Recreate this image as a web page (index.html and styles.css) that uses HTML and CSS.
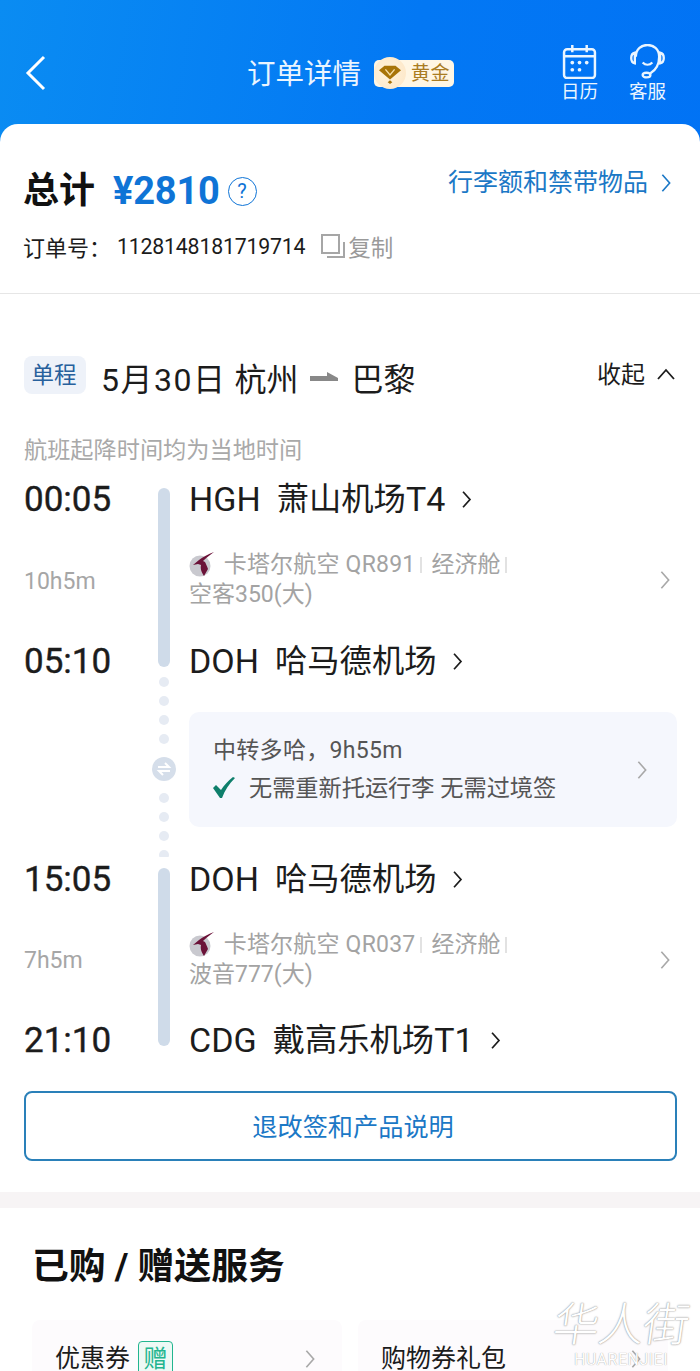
FILE: index.html
```html
<!DOCTYPE html>
<html lang="zh-CN">

<head>
    <meta charset="UTF-8">
    <meta name="viewport" content="width=device-width, initial-scale=1.0">
    <title>订单详情</title>
    <link rel="stylesheet" href="styles.css">
</head>

<body>
    <div class="page">
        <div class="header">
            <svg class="back-icon" viewBox="0 0 24 36"><path d="M20 2 L4 18 L20 34"/></svg>
            <div class="header-title">
                <span>订单详情</span>
                <div class="level-badge">
                    <span class="level-gem">
                        <svg viewBox="0 0 24 24">
                            <path class="gem-fill" d="M6 4 H18 L24 9 L12 19 L0 9 Z"/>
                            <path class="gem-cut" d="M7 8 L12 14 L17 8"/>
                            <path class="gem-fill" d="M12 20 L14.5 22 L12 24 L9.5 22 Z"/>
                        </svg>
                    </span>
                    <span class="level-name">黄金</span>
                </div>
            </div>
            <div class="header-actions">
                <div class="action">
                    <svg class="action-icon" viewBox="0 0 34 34">
                        <rect class="line" x="2" y="5" width="30" height="28" rx="3"/>
                        <path class="line" d="M2 12 H32 M10 1 V8 M24 1 V8"/>
                        <circle class="dot" cx="10" cy="18" r="1.8"/>
                        <circle class="dot" cx="17" cy="18" r="1.8"/>
                        <circle class="dot" cx="24" cy="18" r="1.8"/>
                        <circle class="dot" cx="10" cy="25" r="1.8"/>
                        <circle class="dot" cx="17" cy="25" r="1.8"/>
                    </svg>
                    <span>日历</span>
                </div>
                <div class="action">
                    <svg class="action-icon" viewBox="0 0 36 36">
                        <path class="line" d="M6 13 C6 -3 30 -3 30 13 C30 22 26 27 21 30"/>
                        <path class="line" d="M5 9 C0 10 0 19 5 20 Z M31 9 C36 10 36 19 31 20 Z"/>
                        <path class="line" d="M13 19 C16 22 20 22 23 19"/>
                        <ellipse class="line" cx="17" cy="32" rx="4" ry="2.4"/>
                    </svg>
                    <span>客服</span>
                </div>
            </div>
        </div>

        <div class="sheet">
            <div class="summary">
                <div class="total-row">
                    <span class="total-label">总计</span>
                    <span class="total-price">¥2810</span>
                    <span class="help-icon">?</span>
                    <span class="baggage-link">行李额和禁带物品</span>
                    <svg class="chev chev-blue" viewBox="0 0 12 22"><path d="M2 2 L10 11 L2 20"/></svg>
                </div>
                <div class="order-row">
                    <span class="order-label">订单号：</span>
                    <span class="order-no">1128148181719714</span>
                    <svg class="copy-icon" viewBox="0 0 24 24">
                        <path d="M1 1 H18 V19 H1 Z M6 23 H23 V8"/>
                    </svg>
                    <span class="copy-text">复制</span>
                </div>
            </div>

            <div class="trip">
                <div class="route-row">
                    <span class="route-tag">单程</span>
                    <span class="route-title"><span class="route-date">5月30日</span> 杭州</span>
                    <svg class="route-arrow" viewBox="0 0 28 12"><path d="M0 5 H17 V1 L28 7 V10 H0 Z"/></svg>
                    <span class="route-title">巴黎</span>
                    <span class="collapse">收起</span>
                    <svg class="chev-up" viewBox="0 0 20 12"><path d="M2 11 L10 2 L18 11"/></svg>
                </div>
                <p class="local-note">航班起降时间均为当地时间</p>

                <div class="segment">
                    <div class="rail-bar"></div>
                    <div class="seg-time">00:05</div>
                    <div class="seg-station"><span class="seg-code">HGH</span>&nbsp;&nbsp;萧山机场<span class="seg-code">T4</span><svg class="chev chev-dark" viewBox="0 0 12 22"><path d="M2 2 L10 11 L2 20"/></svg></div>
                    <div class="seg-duration">10h5m</div>
                    <div class="seg-flight">
                        <div class="flight-text">
                            <svg class="airline-logo" viewBox="0 0 26 26">
                                <circle class="logo-disc" cx="11" cy="15" r="10.5"/>
                                <path class="logo-mark" d="M25 1 C19 3 14 6 10 9 L4 14 L9 13 L12 14 C11 18 13 22 15 25 L19 18 C18 15 17 13 16 11 L14 10 C17 7 21 4 25 1 Z"/>
                            </svg>
                            <span class="flight-name">卡塔尔航空 QR891</span><i class="sep"></i><span>经济舱</span><i class="sep"></i><br>空客350(大)
                        </div>
                        <svg class="chev chev-grey" viewBox="0 0 12 22"><path d="M2 2 L10 11 L2 20"/></svg>
                    </div>
                    <div class="seg-time">05:10</div>
                    <div class="seg-station"><span class="seg-code">DOH</span>&nbsp;&nbsp;哈马德机场<svg class="chev chev-dark" viewBox="0 0 12 22"><path d="M2 2 L10 11 L2 20"/></svg></div>
                </div>

                <div class="layover">
                    <div class="dots">
                        <i></i><i></i><i></i><i></i>
                        <span class="swap-icon">
                            <svg viewBox="0 0 24 24">
                                <path d="M6 10 H17 L13 6 M18 14 H7 L11 18"/>
                            </svg>
                        </span>
                        <i></i><i></i><i></i><i></i>
                    </div>
                    <div class="layover-card">
                        <div class="layover-text">
                            <div class="layover-title">中转多哈，9h55m</div>
                            <div class="layover-check">
                                <svg class="check-icon" viewBox="0 0 22 22"><path d="M0 11 L3 8 L8 13 C11 8 15 4 20 0 L22 1 C16 7 12 13 9 21 L7 21 Z"/></svg>
                                <span>无需重新托运行李 无需过境签</span>
                            </div>
                        </div>
                        <svg class="chev chev-grey" viewBox="0 0 12 22"><path d="M2 2 L10 11 L2 20"/></svg>
                    </div>
                </div>

                <div class="segment">
                    <div class="rail-bar"></div>
                    <div class="seg-time">15:05</div>
                    <div class="seg-station"><span class="seg-code">DOH</span>&nbsp;&nbsp;哈马德机场<svg class="chev chev-dark" viewBox="0 0 12 22"><path d="M2 2 L10 11 L2 20"/></svg></div>
                    <div class="seg-duration">7h5m</div>
                    <div class="seg-flight">
                        <div class="flight-text">
                            <svg class="airline-logo" viewBox="0 0 26 26">
                                <circle class="logo-disc" cx="11" cy="15" r="10.5"/>
                                <path class="logo-mark" d="M25 1 C19 3 14 6 10 9 L4 14 L9 13 L12 14 C11 18 13 22 15 25 L19 18 C18 15 17 13 16 11 L14 10 C17 7 21 4 25 1 Z"/>
                            </svg>
                            <span class="flight-name">卡塔尔航空 QR037</span><i class="sep"></i><span>经济舱</span><i class="sep"></i><br>波音777(大)
                        </div>
                        <svg class="chev chev-grey" viewBox="0 0 12 22"><path d="M2 2 L10 11 L2 20"/></svg>
                    </div>
                    <div class="seg-time">21:10</div>
                    <div class="seg-station"><span class="seg-code">CDG</span>&nbsp;&nbsp;戴高乐机场<span class="seg-code">T1</span><svg class="chev chev-dark" viewBox="0 0 12 22"><path d="M2 2 L10 11 L2 20"/></svg></div>
                </div>

                <div class="policy-btn">退改签和产品说明</div>
            </div>

            <div class="band"></div>

            <div class="services">
                <h2>已购 / 赠送服务</h2>
                <div class="service-grid">
                    <div class="service-card">
                        <span>优惠券</span>
                        <span class="gift-tag">赠</span>
                        <svg class="chev chev-grey" viewBox="0 0 12 22"><path d="M2 2 L10 11 L2 20"/></svg>
                    </div>
                    <div class="service-card">
                        <span>购物券礼包</span>
                        <svg class="chev chev-grey" viewBox="0 0 12 22"><path d="M2 2 L10 11 L2 20"/></svg>
                    </div>
                </div>
            </div>
        </div>

        <div class="watermark">
            <div class="wm-cn">华人街</div>
            <div class="wm-en">HUARENJIEI</div>
        </div>
    </div>
</body>
</html>
```

FILE: styles.css
```css
body, html {
    margin: 0;
    padding: 0;
    width: 100%;
    height: 100%;
    overflow: hidden;
    background: #fff;
    font-family: Roboto, "Noto Sans CJK SC", sans-serif;
    color: #1c1c1c;
}

.page {
    position: relative;
    height: 1371px;
    overflow: hidden;
    background: linear-gradient(100deg, #0a8cf2 0%, #0378f4 45%, #006ff5 100%);
}

/* 顶部 */
.header {
    height: 124px;
    display: flex;
    align-items: flex-start;
    position: relative;
    color: #eaf5ff;
}

.back-icon {
    width: 24px;
    height: 36px;
    margin: 55px 0 0 24px;
    fill: none;
    stroke: #fff;
    stroke-width: 3;
}

.header-title {
    display: flex;
    align-items: center;
    margin: 53px 0 0 199px;
    font-size: 28.5px;
    line-height: 40px;
}

.header-title > span {
    position: relative;
    top: 2px;
}

.level-badge {
    display: flex;
    align-items: center;
    margin-left: 13px;
    height: 27px;
    width: 80px;
    background: #fff6e4;
    border-radius: 5px;
}

.level-gem {
    width: 32px;
    height: 32px;
    border-radius: 50%;
    background: radial-gradient(circle at 40% 50%, #fff3dc 0%, #fde6c6 100%);
    display: flex;
    align-items: center;
    justify-content: center;
    flex: none;
}

.level-gem svg {
    width: 22px;
    height: 22px;
}

.gem-fill {
    fill: #a87408;
}

.gem-cut {
    fill: none;
    stroke: #f6dfa8;
    stroke-width: 1.5;
}

.level-name {
    margin-left: 5px;
    font-size: 19px;
    line-height: 27px;
    letter-spacing: 0.5px;
    color: #a97c22;
}

.header-actions {
    display: flex;
    gap: 31px;
    margin: 44px 0 0 107px;
}

.action {
    display: flex;
    flex-direction: column;
    align-items: center;
    width: 37px;
    font-size: 18.5px;
    line-height: 24px;
    white-space: nowrap;
}

.action-icon {
    width: 35px;
    height: 35px;
    margin-bottom: 1px;
}

.line {
    fill: none;
    stroke: #eaf5ff;
    stroke-width: 2.4;
}

.dot {
    fill: #eaf5ff;
}

/* 白色主体 */
.sheet {
    background: #fff;
    border-radius: 18px 18px 0 0;
    height: 1247px;
    overflow: hidden;
}

.summary {
    height: 170px;
    box-sizing: border-box;
    padding: 43px 24px 0;
    border-bottom: 1px solid #e6e6e6;
}

.total-row {
    display: flex;
    align-items: center;
    height: 48px;
}

.total-label {
    font-size: 36px;
    font-weight: 700;
    color: #111;
    line-height: 48px;
    width: 90px;
    margin-left: -1px;
}

.total-price {
    font-size: 38px;
    font-weight: 700;
    color: #0f74d6;
    line-height: 48px;
    letter-spacing: -0.2px;
}

.help-icon {
    width: 27px;
    height: 27px;
    margin-left: 8px;
    border: 1px solid #0f74d6;
    border-radius: 50%;
    font-size: 20px;
    line-height: 27px;
    text-align: center;
    color: #0f74d6;
}

.baggage-link {
    margin-left: auto;
    font-size: 25px;
    line-height: 34px;
    color: #1b78c6;
    position: relative;
    top: -8px;
}

.chev {
    fill: none;
    stroke-width: 1.8;
    flex: none;
}

.chev-blue {
    width: 12px;
    height: 20px;
    margin: 0 4px 16px 12px;
    stroke: #1b78c6;
}

.chev-dark {
    width: 13px;
    height: 19px;
    margin-left: 15px;
    stroke: #1c1c1c;
    stroke-width: 2;
}

.chev-grey {
    width: 12px;
    height: 20px;
    stroke: #a8a8a8;
}

.order-row {
    display: flex;
    align-items: center;
    margin-top: 14px;
    height: 34px;
    font-size: 22px;
}

.order-label {
    width: 93px;
    margin-left: -1px;
    margin-right: 1px;
}

.order-no {
    font-size: 21.3px;
    letter-spacing: -0.2px;
}

.copy-icon {
    width: 24px;
    height: 24px;
    margin-left: 16px;
    fill: none;
    stroke: #a6a6a6;
    stroke-width: 2;
}

.copy-text {
    margin-left: 3px;
    color: #9a9a9a;
    font-size: 22.5px;
}

.trip {
    padding: 62px 23px 0 24px;
}

.route-row {
    display: flex;
    align-items: flex-start;
    height: 40px;
}

.route-tag {
    width: 62px;
    height: 38px;
    padding-right: 2px;
    box-sizing: border-box;
    background: #eef2f9;
    border-radius: 8px;
    font-size: 22.5px;
    line-height: 38px;
    text-align: center;
    color: #27609c;
    margin-right: 15px;
}

.route-title {
    font-size: 32px;
    line-height: 48px;
}

.route-date {
    letter-spacing: 1.5px;
}

.route-arrow {
    width: 28px;
    height: 12px;
    margin: 15px 13px 0 12px;
    fill: #888;
}

.collapse {
    margin-left: auto;
    margin-right: 1px;
    font-size: 24px;
    line-height: 38px;
}

.chev-up {
    width: 20px;
    height: 12px;
    margin: 12px 1px 0 10px;
    fill: none;
    stroke: #1c1c1c;
    stroke-width: 1.8;
}

.local-note {
    margin: 37px 0 0;
    font-size: 23.2px;
    line-height: 34px;
    color: #a9a9a9;
}

/* 航段 */
.segment {
    display: grid;
    grid-template-columns: 134px 12px 1fr;
    grid-template-rows: 44px 118px 44px;
    margin-top: 10px;
}

.layover + .segment {
    margin-top: 0;
    grid-template-rows: 44px 117px 44px;
}

.rail-bar {
    grid-column: 2;
    grid-row: 1 / 4;
    margin: 11px 0 16px;
    background: #cfdbe9;
    border-radius: 6px;
}

.seg-time {
    grid-column: 1;
    font-size: 35px;
    line-height: 46px;
    height: 44px;
    -webkit-text-stroke: 0.4px #1c1c1c;
}

.seg-station {
    grid-column: 3;
    padding-left: 19px;
    display: flex;
    align-items: center;
    font-size: 32.3px;
    line-height: 44px;
    white-space: nowrap;
}

.seg-code {
    font-size: 34px;
}

.seg-duration {
    grid-column: 1;
    font-size: 23px;
    color: #a6a6a6;
    align-self: center;
    margin-top: 2px;
}

.seg-flight {
    grid-column: 3;
    padding-left: 19px;
    display: flex;
    align-items: center;
    justify-content: space-between;
    padding-right: 6px;
    color: #a3a3a3;
    font-size: 23px;
    line-height: 30px;
}

.flight-text {
    white-space: nowrap;
}

.flight-name {
    letter-spacing: 0.2px;
}

.airline-logo {
    width: 26px;
    height: 26px;
    vertical-align: -5px;
    margin-right: 3px;
}

.logo-disc {
    fill: #c9c9cf;
}

.logo-mark {
    fill: #6b1238;
}

.sep {
    display: inline-block;
    width: 2px;
    height: 16px;
    margin: 0 9px 0 5px;
    background: #e2e2e2;
    vertical-align: -1px;
}

/* 中转 */
.layover {
    display: grid;
    grid-template-columns: 134px 12px 1fr;
    height: 174px;
}

.dots {
    grid-column: 2;
    margin-top: -6px;
    height: 180px;
    overflow-x: visible;
    overflow-y: clip;
    display: flex;
    flex-direction: column;
    align-items: center;
    gap: 9px;
}

.dots i {
    flex: none;
    width: 10px;
    height: 10px;
    border-radius: 50%;
    background: #e6ebf3;
}

.swap-icon {
    flex: none;
    width: 24px;
    height: 24px;
    margin: 4px 0 3px;
    border-radius: 50%;
    background: #d5deea;
}

.swap-icon svg {
    display: block;
    width: 24px;
    height: 24px;
    fill: none;
    stroke: #fff;
    stroke-width: 2;
}

.layover-card {
    grid-column: 3;
    margin: 29px 0 30px 19px;
    padding: 0 29px 0 24px;
    background: #f5f7fd;
    border-radius: 10px;
    display: flex;
    align-items: center;
    justify-content: space-between;
}

.layover-title {
    font-size: 23px;
    line-height: 36px;
    letter-spacing: 0.3px;
    color: #555;
}

.layover-check {
    display: flex;
    align-items: center;
    margin-top: 1px;
    font-size: 23.2px;
    line-height: 36px;
    color: #555;
}

.check-icon {
    width: 22px;
    height: 22px;
    margin-right: 14px;
    fill: #0e7f6b;
}

.policy-btn {
    margin-top: 29px;
    height: 70px;
    box-sizing: border-box;
    padding-left: 5px;
    border: 2px solid #2a80b9;
    border-radius: 8px;
    font-size: 25.2px;
    line-height: 70px;
    text-align: center;
    color: #1b78c6;
}

.band {
    margin-top: 31px;
    height: 16px;
    background: #f7f4f5;
}

.services {
    padding: 0 0 0 32px;
}

.services h2 {
    margin: 33px 0 0;
    font-size: 36.8px;
    font-weight: 700;
    line-height: 52px;
    color: #111;
}

.service-grid {
    display: grid;
    grid-template-columns: 310px 310px;
    column-gap: 16px;
    margin-top: 27px;
}

.service-card {
    height: 80px;
    background: #fdfbfd;
    border-radius: 8px 8px 0 0;
    display: flex;
    align-items: flex-start;
    padding: 21px 26px 0 23px;
    font-size: 25px;
    line-height: 36px;
}

.service-card .chev {
    margin: 8px 0 0 auto;
}

.gift-tag {
    width: 33px;
    height: 34px;
    margin-left: 8px;
    border: 1px solid #22b58f;
    border-radius: 4px;
    background: #edf9f5;
    color: #22b58f;
    font-size: 24px;
    line-height: 34px;
    text-align: center;
}

.watermark {
    position: absolute;
    left: 548px;
    top: 1298px;
    width: 146px;
    text-align: center;
    color: #fff;
    pointer-events: none;
}

.wm-cn {
    font-size: 46px;
    line-height: 54px;
    font-weight: 300;
    letter-spacing: -1px;
    text-shadow: 0 0 1px #8d8d8d, 0 0 2px #aaa;
    transform: skewX(-8deg);
}

.wm-en {
    font-size: 16px;
    line-height: 16px;
    letter-spacing: 0.5px;
    text-shadow: 0 0 1px #8d8d8d;
}
```
